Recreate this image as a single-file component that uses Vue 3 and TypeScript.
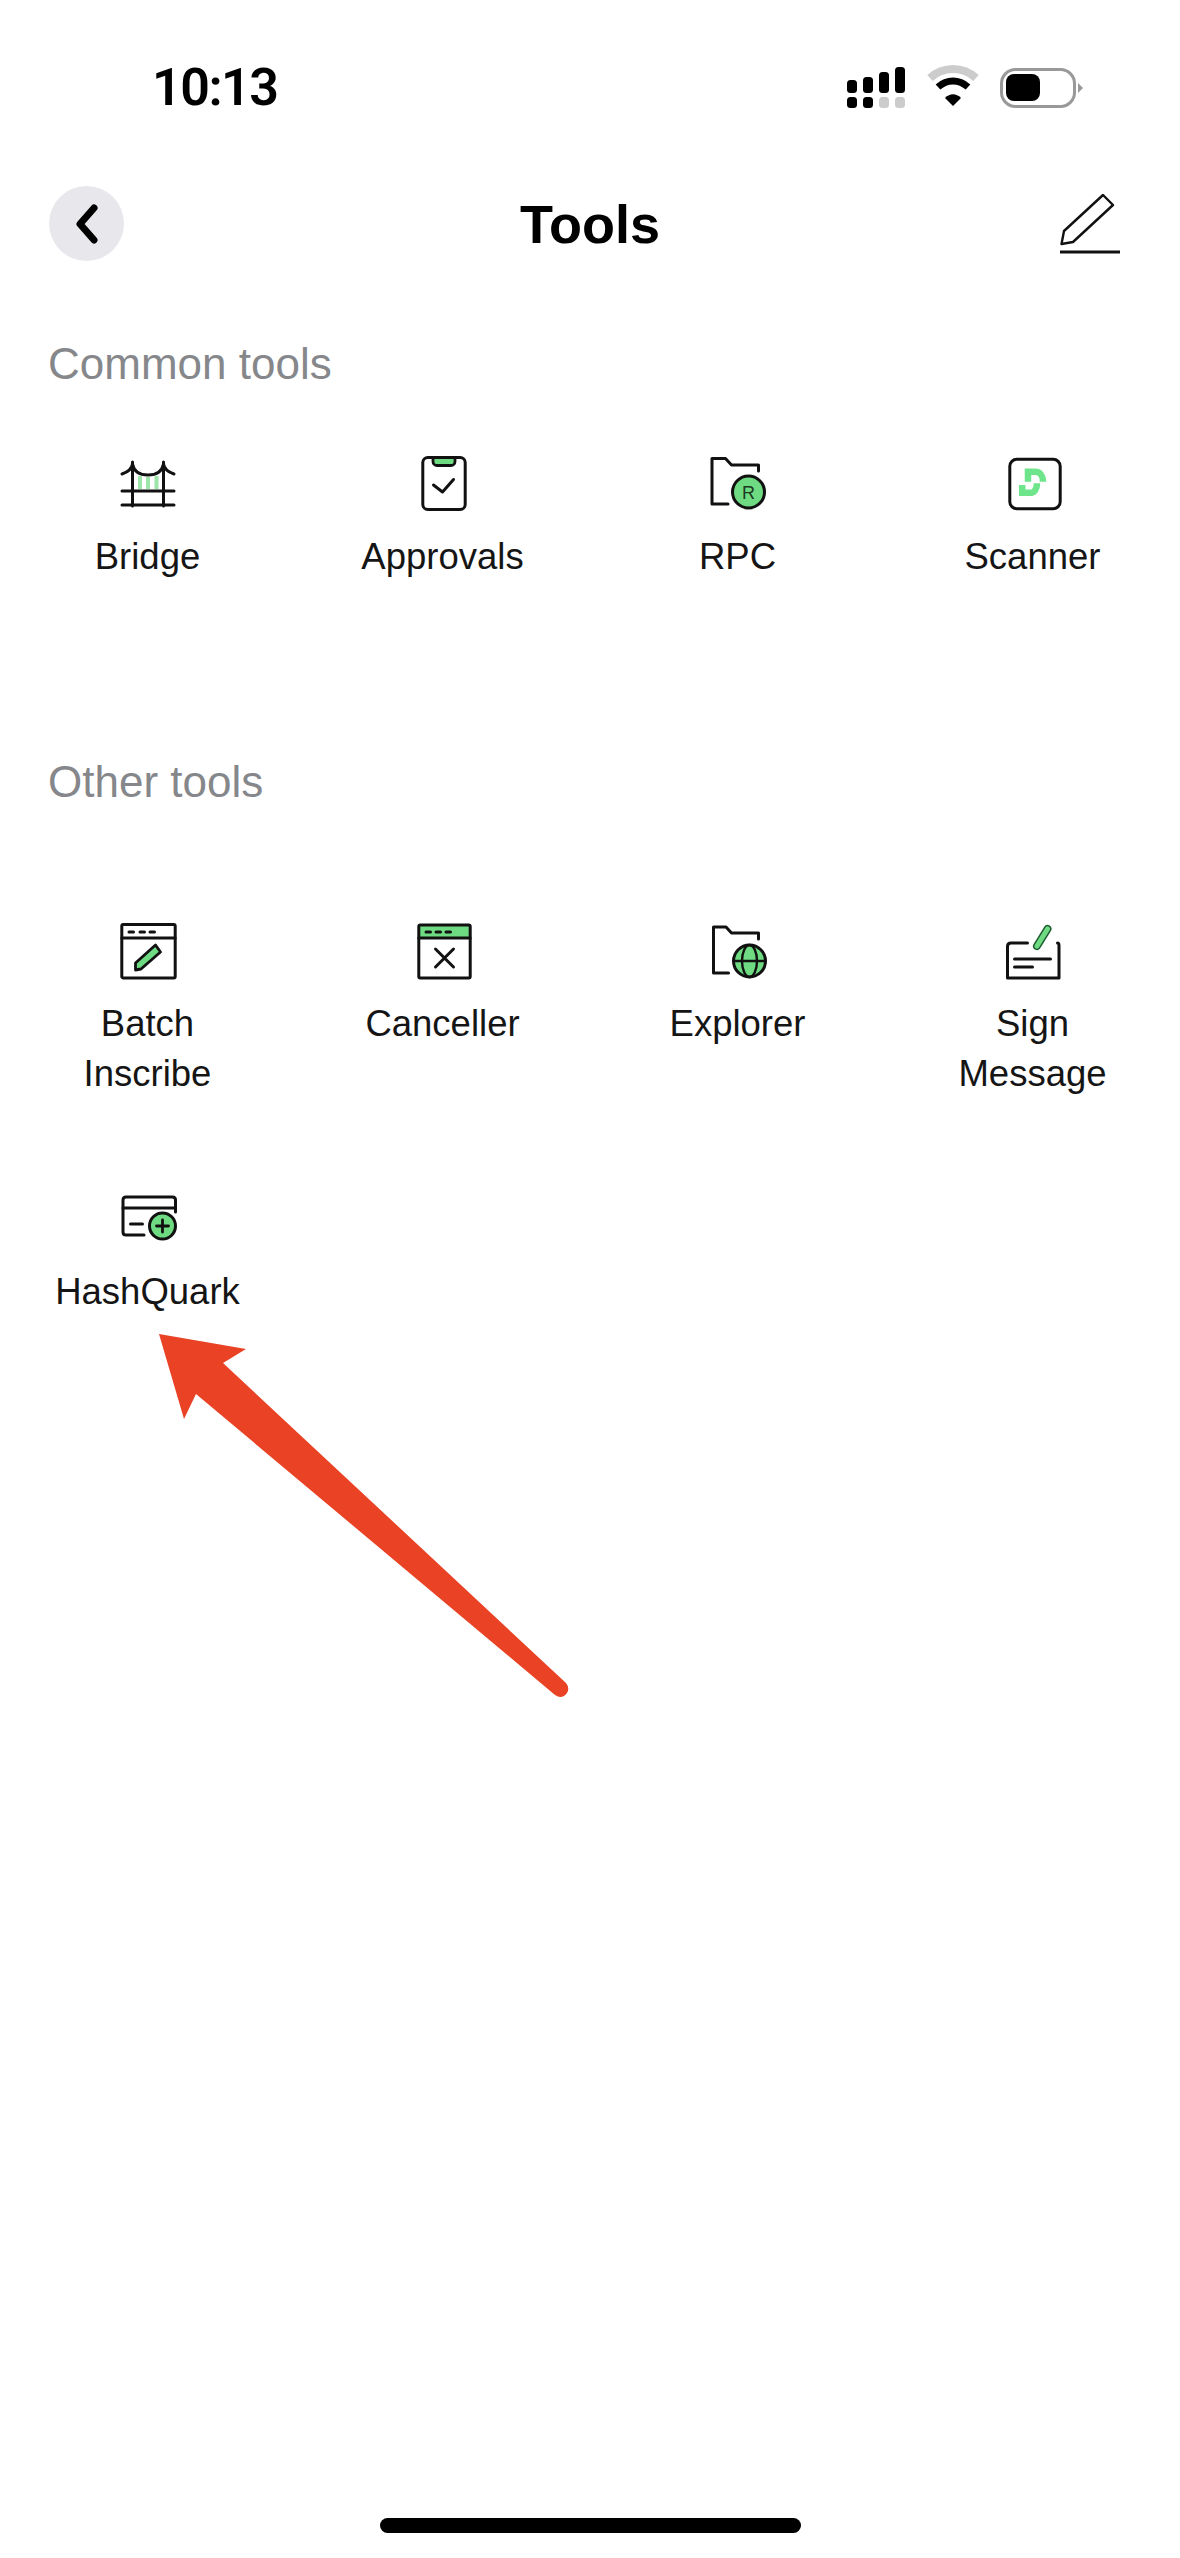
<template>
  <div class="page">
    <div class="status-bar">
      <span class="time">10:13</span>
      <svg class="status-icons" width="240" height="48" viewBox="0 0 240 48">
        <rect x="2" y="16" width="10" height="13" rx="3.5" fill="#000" />
        <rect x="18" y="13" width="10" height="16" rx="3.5" fill="#000" />
        <rect x="34" y="8" width="10" height="21" rx="3.5" fill="#000" />
        <rect x="50" y="3" width="10" height="26" rx="3.5" fill="#000" />
        <rect x="2" y="33" width="10" height="11" rx="3.5" fill="#000" />
        <rect x="18" y="33" width="10" height="11" rx="3.5" fill="#000" />
        <rect x="34" y="33" width="10" height="11" rx="3.5" fill="#ccc" />
        <rect x="50" y="33" width="10" height="11" rx="3.5" fill="#ccc" />
        <path d="M85 14 C98 2 118 2 131 14" fill="none" stroke="#ccc" stroke-width="8" />
        <path d="M93 23 C102 15 114 15 123 23" fill="none" stroke="#000" stroke-width="7" />
        <path d="M100 34 C105 29 111 29 116 34 L108 42 Z" fill="#000" />
        <rect x="156.5" y="5.5" width="73" height="37" rx="14" fill="none" stroke="#999" stroke-width="3" />
        <rect x="161" y="10" width="34" height="27" rx="8" fill="#000" />
        <path d="M233 19 L238 24 L233 29 Z" fill="#999" />
      </svg>
    </div>

    <div class="nav">
      <button class="back" type="button">
        <svg width="24" height="40" viewBox="0 0 24 40">
          <path d="M19 4 L5 20 L19 36" fill="none" stroke="#000" stroke-width="7" stroke-linecap="round" stroke-linejoin="round" />
        </svg>
      </button>
      <h1 class="title">Tools</h1>
      <svg class="edit" width="60" height="60" viewBox="0 0 60 60">
        <path d="M43 1 L53 11 L13 48 L1.5 50 L4 37 Z" fill="none" stroke="#111" stroke-width="2.4" stroke-linejoin="round" />
        <path d="M0 58 H60" stroke="#111" stroke-width="3" />
      </svg>
    </div>

    <h2 class="section-title">Common tools</h2>
    <div class="tool-grid common">
      <div v-for="tool in commonTools" :key="tool.name" class="tool">
        <svg class="tool-icon" width="60" height="60" viewBox="0 0 60 60" v-html="tool.icon"></svg>
        <div class="tool-name">{{ tool.name }}</div>
      </div>
    </div>

    <h2 class="section-title other">Other tools</h2>
    <div class="tool-grid">
      <div v-for="tool in otherTools" :key="tool.name" class="tool">
        <svg class="tool-icon" width="60" height="60" viewBox="0 0 60 60" v-html="tool.icon"></svg>
        <div class="tool-name">{{ tool.name }}</div>
      </div>
    </div>

    <div class="home-indicator"></div>

    <!-- red annotation arrow lying over the page -->
    <svg class="arrow" width="460" height="400" viewBox="130 1310 460 400">
      <path
        d="M159 1334 L246 1349 L223 1363 L566 1683 Q570 1688 567 1693 Q562 1700 555 1695 L196 1394 L184 1419 Z"
        fill="#E94224"
      />
    </svg>
  </div>
</template>

<script setup lang="ts">
interface Tool {
  name: string;
  icon: string;
}

const green = '#6EDB82';
const ink = '#111';
const line = `fill="none" stroke="${ink}" stroke-width="3" stroke-linecap="round" stroke-linejoin="round"`;

const commonTools: Tool[] = [
  {
    name: 'Bridge',
    icon: `
      <path d="M22 22V35M30 23V35M38.5 22V35" stroke="#9BE6A8" stroke-width="4" fill="none" />
      <path d="M14.5 8V52M45.5 8V52M4 37H56M4 51H56" ${line} />
      <path d="M4 20C10 18 14 14 14.5 10C16 18 22 21 30 21C38 21 44 18 45.5 10C46 14 50 18 56 20" ${line} />`,
  },
  {
    name: 'Approvals',
    icon: `
      <rect x="9.8" y="3.5" width="42.4" height="52" rx="5" ${line} />
      <path d="M20 3.5V7.5A4 4 0 0 0 24 11.5H38A4 4 0 0 0 42 7.5V3.5Z" fill="${green}" stroke="${ink}" stroke-width="2.8" />
      <path d="M20.5 31L29.5 38L40.5 25.5" ${line} />`,
  },
  {
    name: 'RPC',
    icon: `
      <path d="M20 50H4V4.5H17.5L23.5 11H50.5V17" ${line} />
      <circle cx="40.5" cy="38" r="16" fill="${green}" stroke="${ink}" stroke-width="3" />
      <text x="40.5" y="44.5" text-anchor="middle" font-family="Liberation Sans, sans-serif" font-size="18" fill="#1c3a22">R</text>`,
  },
  {
    name: 'Scanner',
    icon: `
      <rect x="6.8" y="5.3" width="50.4" height="49.4" rx="7" ${line} />
      <path d="M25 27.7V17.7H32.5C37 17.7 40 22 40 27.7" fill="none" stroke="#6EE58A" stroke-width="6.5" />
      <path d="M19.2 31V38.7H29C31 38.7 34 35 34 29.3" fill="none" stroke="#6EE58A" stroke-width="6.5" />`,
  },
];

const otherTools: Tool[] = [
  {
    name: 'Batch Inscribe',
    icon: `
      <rect x="3.8" y="3.5" width="53.4" height="53.5" rx="1.5" ${line} />
      <path d="M3.8 17H57.2" ${line} />
      <path d="M11 11H15.5M22 11H26.5M32 11H36.5" stroke="${ink}" stroke-width="3" stroke-linecap="round" fill="none" />
      <path d="M17.5 42L37.5 24L42.5 31L23 48L17.5 49Z" fill="${green}" stroke="${ink}" stroke-width="2.8" stroke-linejoin="round" />`,
  },
  {
    name: 'Canceller',
    icon: `
      <rect x="5.8" y="4" width="51.4" height="13" fill="${green}" />
      <rect x="5.8" y="4" width="51.4" height="53" rx="1.5" ${line} />
      <path d="M5.8 17H57.2" ${line} />
      <path d="M13 11H17.5M23 11H27.5M33 11H37.5" stroke="${ink}" stroke-width="3" stroke-linecap="round" fill="none" />
      <path d="M22.5 28L40.5 46M40.5 28L22.5 46" ${line} />`,
  },
  {
    name: 'Explorer',
    icon: `
      <path d="M20.5 52H5.5V6H18L23.5 12H50.5V18" ${line} />
      <circle cx="41.5" cy="40" r="16" fill="${green}" stroke="${ink}" stroke-width="3" />
      <ellipse cx="41.5" cy="40" rx="7.5" ry="16" fill="none" stroke="${ink}" stroke-width="2.4" />
      <path d="M25.5 40H57.5" stroke="${ink}" stroke-width="2.4" fill="none" />`,
  },
  {
    name: 'Sign Message',
    icon: `
      <path d="M24.5 22H8Q4.5 22 4.5 25.5V57H56V24.5Q56 22 54.5 22" ${line} />
      <path d="M44.5 8L34 25" stroke="#1d5a30" stroke-width="8" stroke-linecap="round" fill="none" />
      <path d="M44.5 8L34 25" stroke="${green}" stroke-width="5" stroke-linecap="round" fill="none" />
      <path d="M11.5 38H47.5M11.5 46H29.5" ${line} />`,
  },
  {
    name: 'HashQuark',
    icon: `
      <path d="M26 46H8Q5 46 5 43V11Q5 8 8 8H54.5Q57.5 8 57.5 11V23" ${line} />
      <path d="M5 19H57.5" ${line} />
      <path d="M12.5 35H24.5" ${line} />
      <circle cx="44.5" cy="37" r="13" fill="${green}" stroke="${ink}" stroke-width="3" />
      <path d="M38.5 37H50.5M44.5 31V43" stroke="${ink}" stroke-width="2.8" fill="none" stroke-linecap="round" />`,
  },
];
</script>

<style>
html,
body {
  margin: 0;
  background: #fff;
}
</style>

<style scoped>
.page {
  position: relative;
  width: 1180px;
  height: 2558px;
  display: flex;
  flex-direction: column;
  overflow: hidden;
  background: #fff;
  font-family: "Liberation Sans", Arial, sans-serif;
  color: #111;
}

.status-bar {
  display: flex;
  justify-content: space-between;
  align-items: center;
  height: 48px;
  padding: 64px 95px 0 152px;
}

.time {
  font-family: Roboto, "Liberation Sans", sans-serif;
  font-size: 52px;
  line-height: 48px;
  font-weight: 600;
  letter-spacing: -1.5px;
  color: #000;
}

.status-icons {
  display: block;
}

.nav {
  display: grid;
  grid-template-columns: 1fr auto 1fr;
  align-items: center;
  height: 75px;
  margin-top: 74px;
  padding: 0 49px;
}

.back {
  display: flex;
  align-items: center;
  justify-content: center;
  width: 75px;
  height: 75px;
  padding: 0;
  border: none;
  border-radius: 50%;
  background: #e8e8ec;
}

.title {
  margin: 0;
  font-size: 54px;
  line-height: 60px;
  font-weight: 700;
  color: #000;
}

.edit {
  justify-self: end;
  margin-right: 11px;
}

.section-title {
  margin: 73px 0 0;
  padding-left: 48px;
  font-size: 44px;
  line-height: 60px;
  font-weight: 400;
  color: #85878b;
}

.section-title.other {
  margin-top: 170px;
}

.tool-grid {
  display: grid;
  grid-template-columns: repeat(4, 295px);
  row-gap: 90px;
  margin-top: 109px;
}

.tool-grid.common {
  margin-top: 60px;
}

.tool {
  display: flex;
  flex-direction: column;
  align-items: center;
  gap: 18px;
}

.tool-icon {
  display: block;
}

.tool-name {
  width: 220px;
  text-align: center;
  font-size: 36.5px;
  line-height: 50px;
  color: #151515;
}

.home-indicator {
  width: 421px;
  height: 15px;
  margin: auto auto 25px;
  border-radius: 8px;
  background: #000;
}

.arrow {
  position: absolute;
  left: 130px;
  top: 1310px;
}
</style>
